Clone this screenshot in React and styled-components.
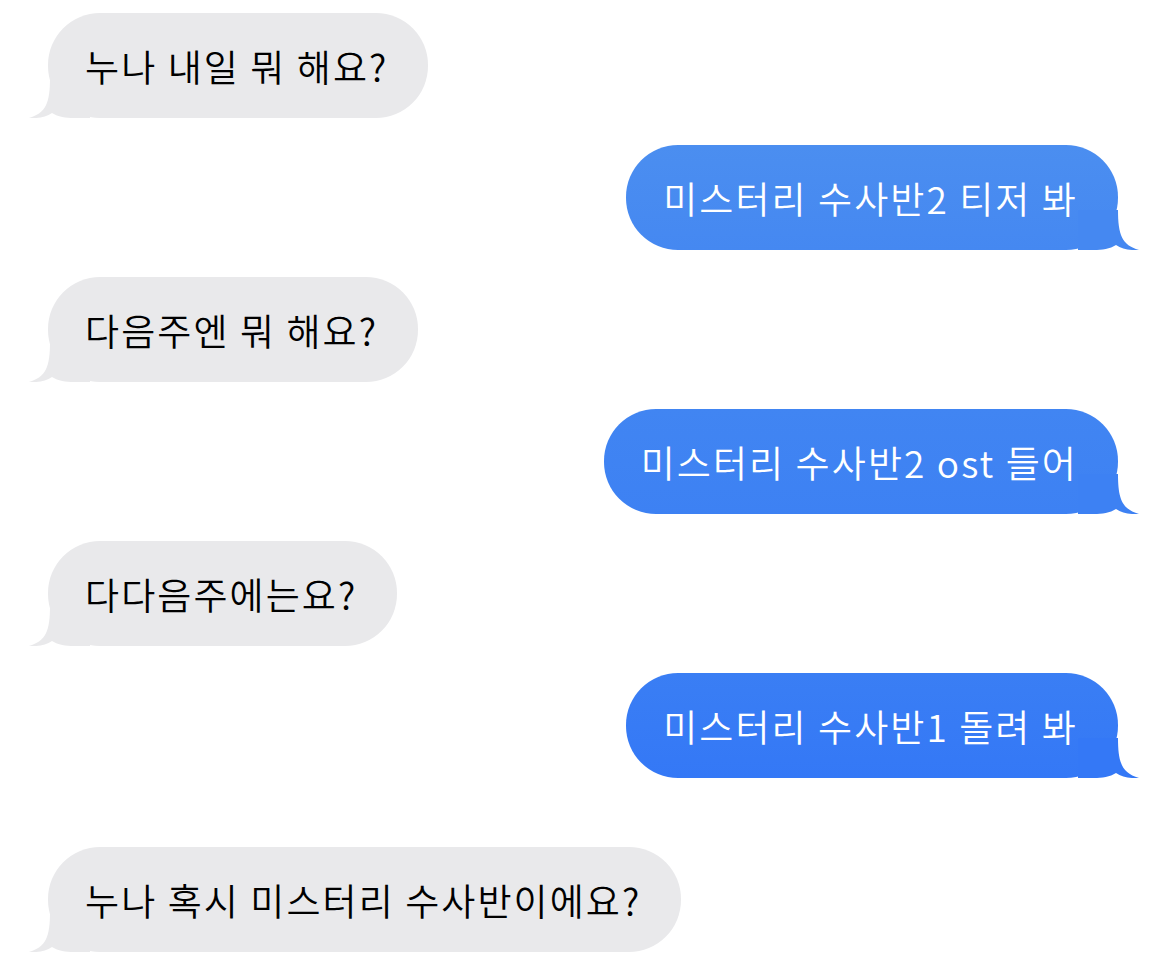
import React from 'react'
import styled, { createGlobalStyle } from 'styled-components'

const GlobalStyle = createGlobalStyle`
  html, body {
    margin: 0;
    padding: 0;
    background: #fff;
  }
  body {
    font-family: "Noto Sans CJK KR", "Noto Sans", sans-serif;
  }
`

const Thread = styled.div`
  display: flex;
  flex-direction: column;
  gap: 27px;
  padding: 13px 52px 0 48px;
  width: 1170px;
  box-sizing: border-box;
`

const Row = styled.div`
  display: flex;
  justify-content: ${(p) => (p.$mine ? 'flex-end' : 'flex-start')};
  margin-top: ${(p) => (p.$later ? '42px' : '0')};
`

const Bubble = styled.div`
  position: relative;
  display: flex;
  align-items: center;
  height: 105px;
  box-sizing: border-box;
  padding: 0 40px 0 37px;
  border-radius: 52px;
  font-size: 37px;
  font-weight: 350;
  letter-spacing: 2.1px;
  white-space: nowrap;
  color: ${(p) => (p.$mine ? '#fff' : '#000')};
  background: ${(p) =>
    p.$mine ? `linear-gradient(${p.$top}, ${p.$bottom})` : '#e9e9eb'};
`

const Tail = styled.svg`
  position: absolute;
  bottom: 0;
  width: 62px;
  height: 40px;
  ${(p) => (p.$mine ? 'right: -22px;' : 'left: -20px; transform: scaleX(-1);')}
`

const BubbleTail = ({ mine, color }) => (
  <Tail $mine={mine} viewBox="-40 -40 62 40">
    <path
      d="M-40,-40 L0,-40 C0,-15 4,-5 21,0 C12,0.6 4,-1 -2,-5 C-8,-1 -16,0 -24,0 L-40,0 Z"
      fill={color}
    />
  </Tail>
)

const messages = [
  { text: '누나 내일 뭐 해요?' },
  { text: '미스터리 수사반2 티저 봐', mine: true, top: '#4b8ef0', bottom: '#4588f1' },
  { text: '다음주엔 뭐 해요?' },
  { text: '미스터리 수사반2 ost 들어', mine: true, top: '#4185f2', bottom: '#3d81f3' },
  { text: '다다음주에는요?' },
  { text: '미스터리 수사반1 돌려 봐', mine: true, top: '#3a7ef4', bottom: '#3478f6' },
  { text: '누나 혹시 미스터리 수사반이에요?', later: true },
]

const App = () => {
  return (
    <>
      <GlobalStyle />
      <Thread>
        {messages.map((m, i) => (
          <Row key={i} $mine={m.mine} $later={m.later}>
            <Bubble $mine={m.mine} $top={m.top} $bottom={m.bottom}>
              {m.text}
              <BubbleTail mine={m.mine} color={m.mine ? m.bottom : '#e9e9eb'} />
            </Bubble>
          </Row>
        ))}
      </Thread>
    </>
  )
}

export default App
